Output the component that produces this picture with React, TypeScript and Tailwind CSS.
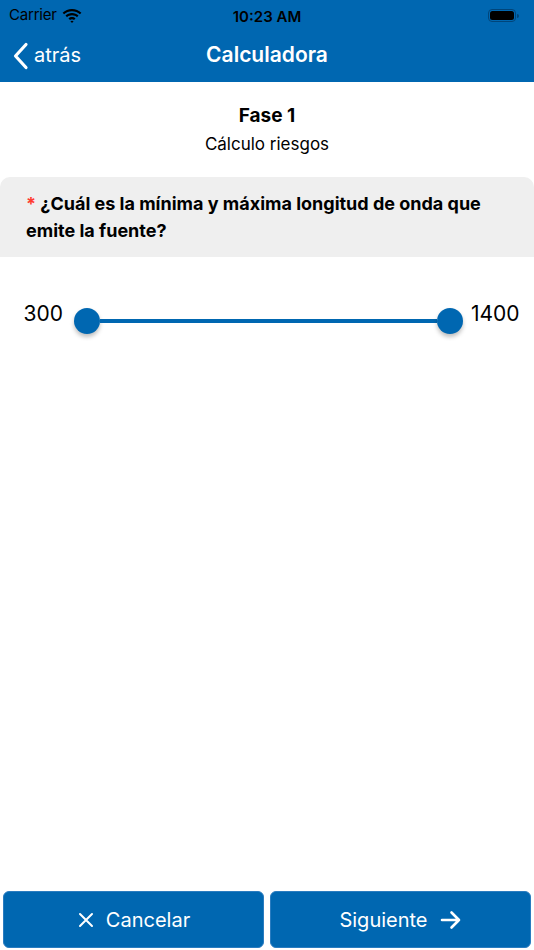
import React, { useState } from 'react';

const BLUE = 'bg-[#0067b1]';

const Wifi = () => (
  <svg width="20" height="14" viewBox="0 0 20 14" fill="#000">
    <path d="M10 2.2c3 0 5.8 1.2 7.9 3.1l1.5-1.6C16.9 1.4 13.6 0 10 0S3.1 1.4.6 3.7l1.5 1.6C4.2 3.4 7 2.2 10 2.2z" />
    <path d="M10 6.3c1.9 0 3.700.7 5 1.9l1.5-1.6C14.8 5 12.5 4.1 10 4.1S5.2 5 3.5 6.6L5 8.2c1.3-1.2 3.1-1.9 5-1.900z" />
    <path d="M10 10.3c.8 0 1.5.3 2 .8l1.5-1.6c-.9-.9-2.2-1.4-3.5-1.4s-2.6.5-3.5 1.4L8 11.1c.5-.5 1.2-.8 2-.8z" />
    <path d="M10 14l1.6-1.7c-.4-.4-1-.6-1.600-.6s-1.2.2-1.6.6z" />
  </svg>
);

const Thumb = () => (
  <div className="w-[26px] h-[26px] rounded-full bg-[#0067b1] shadow-[0_3px_4px_rgba(0,0,0,0.25)] shrink-0" />
);

export default function App() {
  const [range] = useState({ min: 300, max: 1400 });

  return (
    <div className="w-[534px] h-[950px] bg-white flex flex-col font-['Inter',sans-serif] text-black">
      {/* status bar + nav */}
      <div className={`${BLUE} h-[82px] flex flex-col shrink-0`}>
        <div className="h-[29px] pt-[2px] flex items-center px-[9px] relative">
          <div className="flex items-center gap-[5px] text-[15px] tracking-[-0.2px]">
            <span>Carrier</span>
            <Wifi />
          </div>
          <span className="absolute left-0 right-0 text-center text-[15px] font-semibold top-[6px]">10:23 AM</span>
          <div className="ml-auto flex items-center gap-[1px] mr-[6px]">
            <div className="w-[28px] h-[13px] rounded-[4px] border border-[#00457a] p-[1px]">
              <div className="w-full h-full rounded-[2.5px] bg-black" />
            </div>
            <div className="w-[2px] h-[4px] rounded-r-sm bg-[#00457a]" />
          </div>
        </div>
        <div className="flex-1 flex items-center relative">
          <div className="flex items-center pl-[12px] gap-[4px] text-white">
            <svg width="18" height="28" viewBox="0 0 18 28" fill="none" stroke="white" strokeWidth="3.2" strokeLinecap="round" strokeLinejoin="round">
              <path d="M14 2.5 L3.5 14 L14 25.5" />
            </svg>
            <span className="text-[20px] mt-[-2px]">atrás</span>
          </div>
          <span className="absolute left-0 right-0 text-center text-white text-[21px] font-semibold mt-[-1px] pointer-events-none">Calculadora</span>
        </div>
      </div>

      {/* phase header */}
      <div className="flex flex-col items-center pt-[20px]">
        <span className="text-[19px] font-bold leading-[28px]">Fase 1</span>
        <span className="text-[17px] leading-[26px] mt-[1px]">Cálculo riesgos</span>
      </div>

      {/* question */}
      <div className="mt-[20px] bg-[#efefef] rounded-t-[10px] h-[80px] pl-[26px] pr-[20px] pt-[13px]">
        <p className="text-[18px] font-bold leading-[27px]">
          <span className="text-[#ff3b30] font-bold">*</span>{' '}
          ¿Cuál es la mínima y máxima longitud de onda que emite la fuente?
        </p>
      </div>

      {/* range slider */}
      <div className="flex items-center px-[13px] mt-[51px]">
        <span className="text-[21px] w-[61px] text-right pr-[11px] mt-[-14px]">{range.min}</span>
        <div className="flex-1 flex items-center">
          <Thumb />
          <div className="flex-1 h-[4px] bg-[#0067b1]" />
          <Thumb />
        </div>
        <span className="text-[21px] w-[58px] text-left pl-[8px] mt-[-14px]">{range.max}</span>
      </div>

      <div className="flex-1" />

      {/* footer buttons */}
      <div className="flex gap-[6px] px-[3px] pb-[2px]">
        <button className={`flex-1 h-[57px] ${BLUE} rounded-[6px] border border-[#2a7cc0] flex items-center justify-center gap-[11px] text-white text-[20px]`}>
          <svg width="18" height="18" viewBox="0 0 18 18" stroke="white" strokeWidth="2" strokeLinecap="round">
            <path d="M3 3 L15 15 M15 3 L3 15" />
          </svg>
          <span>Cancelar</span>
        </button>
        <button className={`flex-1 h-[57px] ${BLUE} rounded-[6px] border border-[#2a7cc0] flex items-center justify-center gap-[12px] text-white text-[20px]`}>
          <span>Siguiente</span>
          <svg width="22" height="20" viewBox="0 0 22 20" fill="none" stroke="white" strokeWidth="2.6" strokeLinecap="round" strokeLinejoin="round">
            <path d="M2 10 H19 M11.5 2.5 L19 10 L11.5 17.5" />
          </svg>
        </button>
      </div>
    </div>
  );
}
